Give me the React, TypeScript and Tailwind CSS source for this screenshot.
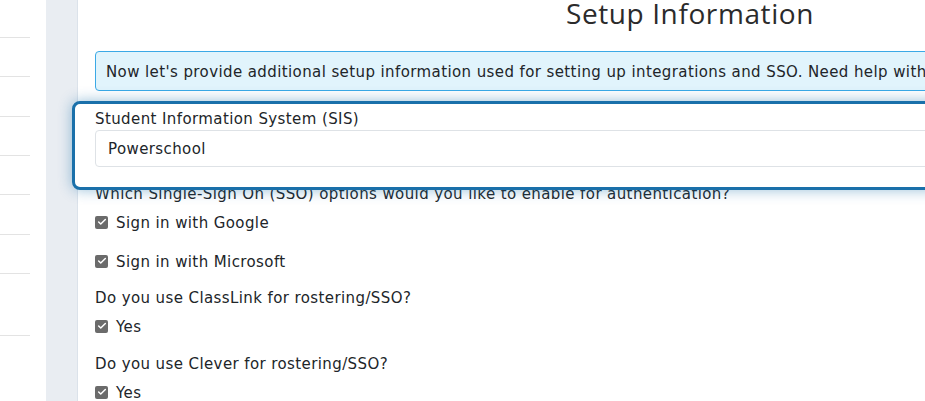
import { Check } from 'lucide-react';

const sidebarGaps = [39, 40, 39, 39, 40, 39, 62, 62];

function CheckRow({ label, className }: { label: string; className?: string }) {
  return (
    <label className={`flex h-[24px] items-center gap-[8px] ${className ?? ''}`}>
      <span className="flex size-[13px] items-center justify-center rounded-[2px] bg-[#6b6b6b]">
        <Check className="size-[10px] text-white" strokeWidth={3.5} />
      </span>
      <span className="pt-[2px]">{label}</span>
    </label>
  );
}

export default function App() {
  return (
    <div className="flex h-[401px] w-[925px] overflow-hidden bg-white font-['DejaVu_Sans',sans-serif] text-[15px] tracking-[0.4px] text-[#212529]">
      {/* left nav */}
      <aside className="w-[46px] shrink-0 pt-[37px]">
        {sidebarGaps.map((h, i) => (
          <div key={i} className="w-[30px] border-t border-[#e3e3e3]" style={{ height: h }} />
        ))}
      </aside>
      <div className="w-[32px] shrink-0 border-r border-[#dbe2ea] bg-[#e9edf2]" />

      {/* main content */}
      <main className="w-[1224px] shrink-0 px-[17px]">
        <h1 className="-mt-[4px] text-center font-['Open_Sans',sans-serif] text-[28px] leading-[34px] tracking-[0.6px] text-[#2b2b2b]">
          Setup Information
        </h1>

        <div className="mt-[21px] flex h-[40px] items-center overflow-hidden whitespace-nowrap rounded-[4px] border border-[#3ba9e6] bg-[#e1f4fc] px-[10px] pt-[2px]">
          Now let's provide additional setup information used for setting up integrations and SSO. Need help with this step? Contact our support team.
        </div>

        {/* highlighted field */}
        <div className="relative mt-[16px]">
          <div className="absolute -bottom-[23px] -left-[23px] -right-[23px] -top-[6px] z-10 rounded-[8px] border-[3px] border-[#1a70aa] bg-white shadow-[0_0_14px_rgba(26,112,170,0.45)]" />
          <div className="relative z-20">
            <div className="h-[24px] leading-[24px]">Student Information System (SIS)</div>
            <div className="-mt-[1px] flex h-[37px] items-center rounded-[4px] border border-[#dee2e6] px-[12px] pt-[2px]">
              Powerschool
            </div>
          </div>
        </div>

        <p className="mt-[15px] leading-[24px]">
          Which Single-Sign On (SSO) options would you like to enable for authentication?
        </p>
        <CheckRow label="Sign in with Google" className="mt-[4px]" />
        <CheckRow label="Sign in with Microsoft" className="mt-[15px]" />

        <p className="mt-[13px] leading-[24px]">Do you use ClassLink for rostering/SSO?</p>
        <CheckRow label="Yes" className="mt-[4px]" />

        <p className="mt-[14px] leading-[24px]">Do you use Clever for rostering/SSO?</p>
        <CheckRow label="Yes" className="mt-[4px]" />
      </main>
    </div>
  );
}
